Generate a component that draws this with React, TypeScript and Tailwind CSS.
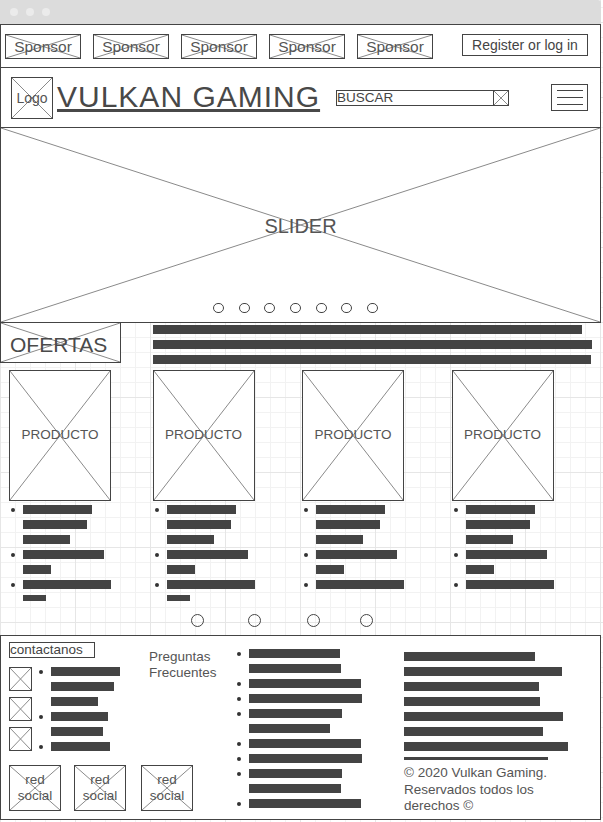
import clsx from 'clsx';
import type { ReactNode } from 'react';

// wireframe placeholder: box with a cross drawn corner to corner
const XLines = () => (
  <svg
    className="pointer-events-none absolute inset-0 h-full w-full"
    viewBox="0 0 100 100"
    preserveAspectRatio="none"
  >
    <line x1="0" y1="0" x2="100" y2="100" stroke="#8a8a8a" strokeWidth="1" vectorEffect="non-scaling-stroke" />
    <line x1="100" y1="0" x2="0" y2="100" stroke="#8a8a8a" strokeWidth="1" vectorEffect="non-scaling-stroke" />
  </svg>
);

const XBox = ({ className, children }: { className?: string; children?: ReactNode }) => (
  <div className={clsx('relative flex items-center justify-center overflow-hidden bg-white', className)}>
    <XLines />
    {children && <div className="relative text-center">{children}</div>}
  </div>
);

const Bar = ({ w, h = 'h-[9px]' }: { w: string; h?: string }) => <div className={clsx('bg-[#444]', w, h)} />;

const Dot = () => <div className="h-[4px] w-[4px] rounded-full bg-[#333]" />;

type Row = { w: string; dot?: boolean; h?: string };

const productRows: Row[] = [
  { w: 'w-[69px]', dot: true },
  { w: 'w-[64px]' },
  { w: 'w-[47px]' },
  { w: 'w-[81px]', dot: true },
  { w: 'w-[28px]' },
  { w: 'w-[88px]', dot: true },
  { w: 'w-[23px]', h: 'h-[6px]' },
];

const products = [
  { col: 'w-[144px]', rows: 7 },
  { col: 'w-[150px]', rows: 7 },
  { col: 'w-[150px]', rows: 6 },
  { col: 'w-[150px]', rows: 6 },
];

const contactRows: Row[] = [
  { w: 'w-[69px]', dot: true },
  { w: 'w-[63px]' },
  { w: 'w-[47px]' },
  { w: 'w-[57px]', dot: true },
  { w: 'w-[52px]' },
  { w: 'w-[59px]', dot: true },
];

const linkRows: Row[] = [
  { w: 'w-[91px]', dot: true },
  { w: 'w-[92px]' },
  { w: 'w-[112px]', dot: true },
  { w: 'w-[113px]', dot: true },
  { w: 'w-[93px]', dot: true },
  { w: 'w-[81px]' },
  { w: 'w-[112px]', dot: true },
  { w: 'w-[113px]', dot: true },
  { w: 'w-[93px]', dot: true },
  { w: 'w-[92px]' },
  { w: 'w-[112px]', dot: true },
];

const infoBars = ['w-[131px]', 'w-[158px]', 'w-[135px]', 'w-[136px]', 'w-[159px]', 'w-[139px]', 'w-[164px]'];

const sponsors = ['Sponsor', 'Sponsor', 'Sponsor', 'Sponsor', 'Sponsor'];

export default function App() {
  return (
    <div className="h-[822px] w-[603px] overflow-hidden bg-white font-['Liberation_Sans',Arial,sans-serif] text-[#4a4a4a] [background-image:linear-gradient(to_right,#e6e6e6_1px,transparent_1px),linear-gradient(to_bottom,#e6e6e6_1px,transparent_1px),linear-gradient(to_right,#f2f2f2_1px,transparent_1px),linear-gradient(to_bottom,#f2f2f2_1px,transparent_1px)] [background-position:0_0,0_22px,0_0,0_7px] [background-size:75px_75px,75px_75px,15px_15px,15px_15px]">
      <div className="w-[601px]">
        {/* browser chrome */}
        <div className="flex h-[24px] items-center gap-[8px] rounded-tr-[3px] bg-[#dcdcdc] pl-[10px]">
          <div className="h-[8px] w-[8px] rounded-full bg-[#ebebeb]" />
          <div className="h-[8px] w-[8px] rounded-full bg-[#ebebeb]" />
          <div className="h-[8px] w-[8px] rounded-full bg-[#ebebeb]" />
        </div>

        {/* header */}
        <header className="border-x border-t border-[#444] bg-white">
          <div className="flex h-[43px] items-start border-b border-[#444] pt-[9px] pl-[4px]">
            <div className="flex gap-3">
              {sponsors.map((s, i) => (
                <XBox key={i} className="h-[25px] w-[76px] border border-[#444] text-[15.5px] leading-none text-[#555]">
                  {s}
                </XBox>
              ))}
            </div>
            <div className="ml-[29px] flex h-[22px] w-[126px] items-center justify-center border border-[#444] text-[14px] leading-none text-[#444]">
              Register or log in
            </div>
          </div>

          <div className="flex h-[60px] items-center border-b border-[#444] pl-[10px]">
            <XBox className="h-[42px] w-[42px] border border-[#444] text-[14px] leading-none text-[#555]">Logo</XBox>
            <div className="ml-[4px] w-[279px]">
              <span className="text-[30px] leading-none tracking-[1px] text-[#484848] underline decoration-[3px] underline-offset-[2px]">
                VULKAN GAMING
              </span>
            </div>
            <div className="flex h-[16px] w-[173px] border border-[#444]">
              <div className="flex-1 text-[13.5px] leading-[14px] text-[#444]">BUSCAR</div>
              <XBox className="w-[15px] border-l border-[#444]" />
            </div>
            <div className="ml-[42px] flex h-[27px] w-[37px] flex-col items-center gap-[6px] border border-[#444] pt-[5px]">
              <div className="h-px w-[26px] bg-[#444]" />
              <div className="h-px w-[26px] bg-[#444]" />
              <div className="h-px w-[26px] bg-[#444]" />
            </div>
          </div>
        </header>

        {/* slider */}
        <section className="relative flex h-[195px] flex-col border-x border-b border-[#444] bg-white">
          <XLines />
          <div className="relative mt-[86px] text-center text-[20px] leading-[24px] text-[#555]">SLIDER</div>
          <div className="relative mt-[65px] flex gap-[14.7px] pl-[212px]">
            {[0, 1, 2, 3, 4, 5, 6].map((i) => (
              <div key={i} className="h-[10px] w-[11px] rounded-full border border-[#444]" />
            ))}
          </div>
        </section>

        {/* ofertas */}
        <div className="flex items-start">
          <XBox className="-mt-px h-[41px] w-[121px] justify-start border border-[#444]">
            <div className="pt-[4px] pl-[9px] text-[21px] leading-none text-[#4a4a4a]">OFERTAS</div>
          </XBox>
          <div className="ml-[32px] flex flex-col gap-[6px] pt-[2px]">
            <Bar w="w-[429px]" />
            <Bar w="w-[439px]" />
            <Bar w="w-[438px]" />
          </div>
        </div>

        {/* productos */}
        <div className="mt-[6px] flex items-start pl-[9px]">
          {products.map((p, i) => (
            <div key={i} className={p.col}>
              <XBox className="h-[131px] w-[102px] border border-[#444] text-[13.5px] leading-none text-[#555]">
                <div className="-mt-[2px]">PRODUCTO</div>
              </XBox>
              <div className="mt-[4px]">
                {productRows.slice(0, p.rows).map((r, j) => (
                  <div key={j} className="flex h-[15px] items-start">
                    <div className="flex h-[9px] w-[14px] items-center pl-[2px]">{r.dot && <Dot />}</div>
                    <Bar w={r.w} h={r.h} />
                  </div>
                ))}
              </div>
            </div>
          ))}
        </div>

        {/* paginacion */}
        <div className="mt-[4px] flex pl-[191px]">
          <div className="h-[13px] w-[13px] rounded-full border border-[#444]" />
          <div className="ml-[44px] h-[13px] w-[13px] rounded-full border border-[#444]" />
          <div className="ml-[46px] h-[13px] w-[13px] rounded-full border border-[#444]" />
          <div className="ml-[40px] h-[13px] w-[13px] rounded-full border border-[#444]" />
        </div>

        {/* footer */}
        <footer className="mt-[8px] flex h-[185px] items-start border border-[#444] bg-white pl-[8px] text-[13.5px] text-[#555]">
          <div className="w-[228px]">
            <div className="flex items-start">
              <div className="w-[140px]">
                <div className="mt-[6px] h-[16px] w-[86px] border border-[#444] leading-[14px] text-[#444]">contactanos</div>
                <div className="mt-[9px] flex items-start">
                  <div className="flex w-[23px] flex-col gap-[6px]">
                    <XBox className="h-[24px] w-[23px] border border-[#444]" />
                    <XBox className="h-[24px] w-[23px] border border-[#444]" />
                    <XBox className="h-[24px] w-[23px] border border-[#444]" />
                  </div>
                  <div>
                    {contactRows.map((r, j) => (
                      <div key={j} className="flex h-[15px] items-start">
                        <div className="flex h-[9px] w-[19px] items-center pl-[7px]">{r.dot && <Dot />}</div>
                        <Bar w={r.w} />
                      </div>
                    ))}
                  </div>
                </div>
              </div>
              <div className="mt-[13px] leading-[16px]">
                Preguntas
                <br />
                Frecuentes
              </div>
            </div>
            <div className="mt-[8px] flex">
              <XBox className="h-[46px] w-[52px] border border-[#444] leading-[16px]">
                red
                <br />
                social
              </XBox>
              <XBox className="ml-[13px] h-[46px] w-[52px] border border-[#444] leading-[16px]">
                red
                <br />
                social
              </XBox>
              <XBox className="ml-[15px] h-[46px] w-[52px] border border-[#444] leading-[16px]">
                red
                <br />
                social
              </XBox>
            </div>
          </div>

          <div className="mt-[13px] w-[167px]">
            {linkRows.map((r, j) => (
              <div key={j} className="flex h-[15px] items-start">
                <div className="flex h-[9px] w-[12px] items-center">{r.dot && <Dot />}</div>
                <Bar w={r.w} />
              </div>
            ))}
          </div>

          <div className="mt-[16px]">
            {infoBars.map((w, j) => (
              <div key={j} className="h-[15px]">
                <Bar w={w} />
              </div>
            ))}
            <div className="h-[8px]">
              <Bar w="w-[144px]" h="h-[3px]" />
            </div>
            <div className="leading-[16.5px]">
              © 2020 Vulkan Gaming.
              <br />
              Reservados todos los
              <br />
              derechos ©
            </div>
          </div>
        </footer>
      </div>
    </div>
  );
}
